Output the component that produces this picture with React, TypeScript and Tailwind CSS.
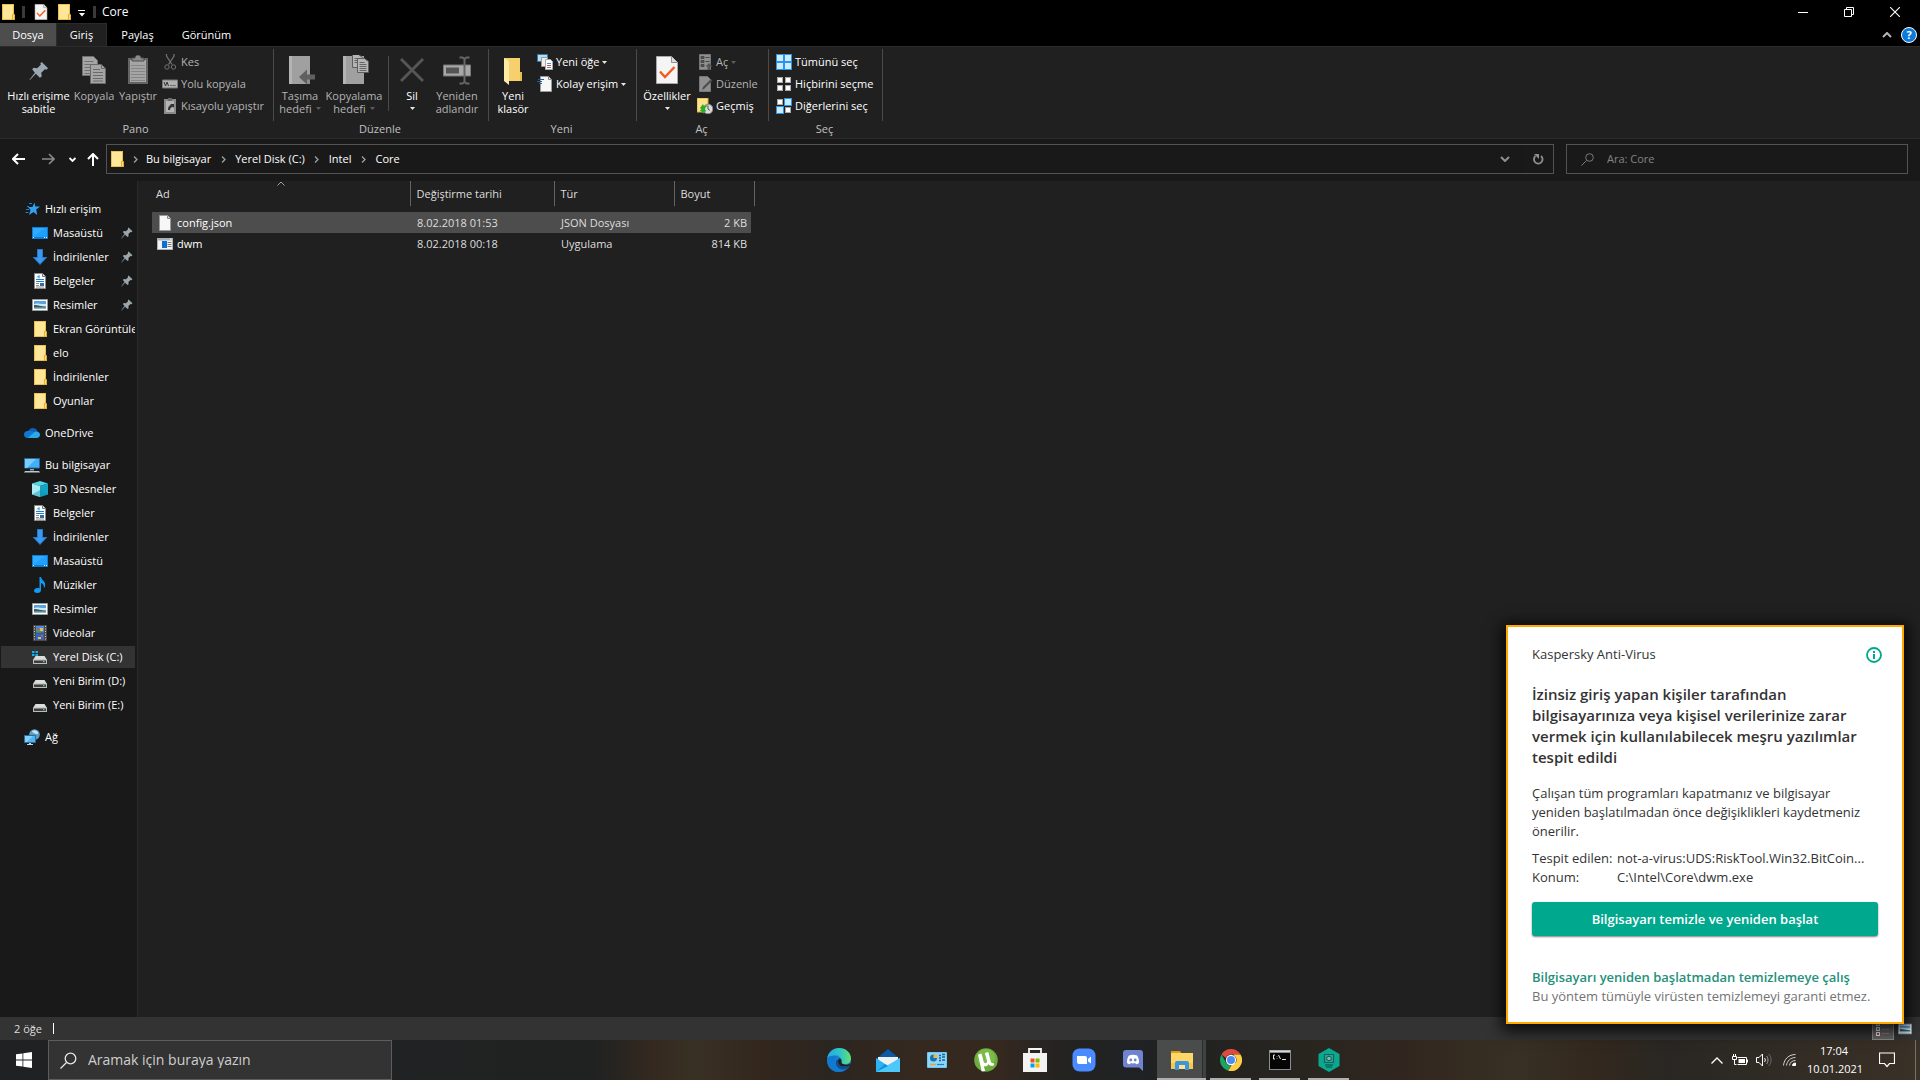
import type { ReactNode } from "react";
import { clsx } from "clsx";

/* ---------- small shared icons ---------- */

const FolderIcon = ({ className = "w-4 h-4" }: { className?: string }) => (
  <svg viewBox="0 0 16 16" className={className}>
    <path d="M2 0h12v11h1v5H2z" fill="#edc04a" />
    <path d="M3 1h10v14H3z" fill="#ffe699" />
    <path d="M12.500 10.500h2v5h-2z" fill="#ffdf7a" stroke="#e0ae35" />
  </svg>
);

const CheckPageIcon = ({ className = "w-4 h-4" }: { className?: string }) => (
  <svg viewBox="0 0 22 28" className={className}>
    <path d="M.5.5h15l6 6v21H.5z" fill="#f5f5f5" stroke="#a8a8a8" />
    <path d="M15.500.5v6h6" fill="#ddd" stroke="#909090" />
    <path d="M4 15.500l5 5.500L18.500 11" fill="none" stroke="#f25c1a" strokeWidth="2.400" />
  </svg>
);

const PageIcon = () => (
  <svg viewBox="0 0 16 16" className="w-4 h-4">
    <path d="M2.500.5h8l3 3v12h-11z" fill="#f7f7f7" stroke="#9a9a9a" />
    <path d="M10.500.5v3h3" fill="#ddd" stroke="#8a8a8a" />
  </svg>
);

const AppIcon = () => (
  <svg viewBox="0 0 16 16" className="w-4 h-4">
    <path d="M0 2h16v12H0z" fill="#a9b0b6" />
    <path d="M1 4.500h14V13H1z" fill="#f4f4f4" />
    <path d="M5 5h5v7H5z" fill="#0b6fd8" />
    <path d="M10.500 6.500h4M10.500 8.500h4M10.500 10.500h4" stroke="#777" />
    <path d="M13 3h1.500" stroke="#fff" />
  </svg>
);

const PinIcon = ({ className = "w-3 h-3", color = "#9aa5ad" }: { className?: string; color?: string }) => (
  <svg viewBox="0 0 22 22" className={className}>
    <path d="M14 1l7 7-2 1.500-1.500-.5-4 4 .5 4-2 1.500-4.500-4.500L1 21l-.5-.5 6-7.500L3.500 9 5 7.500l4 .5 4-4-.5-1.500z" fill={color} />
  </svg>
);

const Caret = ({ dim }: { dim?: boolean }) => (
  <svg viewBox="0 0 5 3" className="w-[5px] h-[3px] shrink-0">
    <path d="M0 0h5L2.500 3z" fill={dim ? "#5c5c5c" : "#e8e8e8"} />
  </svg>
);

/* ---------- sidebar icons ---------- */

const StarIcon = () => (
  <svg viewBox="0 0 16 16" className="w-4 h-4">
    <path d="M10.500 1.500l.8 4H16l-3.800 3 1 5.500-3.700-3L5 14l1.500-5-2.500-3h4.500z" fill="#2ea3f2" />
    <path d="M5 2.500h3M3 5.500h2M2 8.500h3M1.500 11.500h3" stroke="#1c7fd0" />
  </svg>
);

const DesktopIcon = () => (
  <svg viewBox="0 0 16 16" className="w-4 h-4">
    <path d="M0 2h16v12H0z" fill="#0f7bd4" />
    <path d="M1 3h14v9H1z" fill="#1ea0ff" />
    <path d="M1 12L13 3H1z" fill="#2fabff" />
    <path d="M1 12.500h1M12 12.500h1M14 12.500h1" stroke="#fff" />
  </svg>
);

const DownIcon = () => (
  <svg viewBox="0 0 16 16" className="w-4 h-4">
    <path d="M5 0h6v8h4.500L8 16 .5 8H5z" fill="#2878c8" />
    <path d="M6 1h4v8h3.200L8 14.700 2.800 9H6z" fill="#3a9af0" />
  </svg>
);

const DocIcon = () => (
  <svg viewBox="0 0 16 16" className="w-4 h-4">
    <path d="M2.500.5h8l3 3v12h-11z" fill="#fff" stroke="#8b8b8b" />
    <path d="M10.500.5v3h3" fill="#ddd" stroke="#777" />
    <path d="M5 4.500l2-2v3M4 6.500h8M4 8.500h8" stroke="#1d82d2" fill="none" />
    <path d="M4 10.500h3M4 12.500h3M4 14h8" stroke="#8d8d8d" />
    <path d="M8 10h4v3H8z" fill="#2c6ea5" />
  </svg>
);

const PicIcon = () => (
  <svg viewBox="0 0 16 16" className="w-4 h-4">
    <path d="M.5 2.500h15v11H.5z" fill="#fff" stroke="#9a9a9a" />
    <path d="M2 4h12v4H2z" fill="#5aa3e0" />
    <path d="M2 7c3-1.500 6 .5 12 0v3H2z" fill="#d3e8f5" />
    <path d="M2 8c3-.5 6 1 12 1.500V11H2z" fill="#2f5f6f" />
    <path d="M2 10.500h12V12H2z" fill="#8fbcc0" />
  </svg>
);

const CloudIcon = () => (
  <svg viewBox="0 0 16 16" className="w-4 h-4">
    <path d="M4 8c0-3 2.500-5 5-5 2.200 0 4 1.500 4.500 3.500L8 9z" fill="#0f5fb8" />
    <path d="M3.500 6C1.500 6 0 7.500 0 9.500S1.500 13 3.500 13l8-5C9 6 6 5.500 3.500 6z" fill="#0f78d4" />
    <path d="M12.500 6.500c2 0 3.500 1.400 3.500 3.300S14.500 13 12.800 13H3.500L9.500 8c.8-1 1.800-1.500 3-1.500z" fill="#29a8ea" />
  </svg>
);

const PcIcon = () => (
  <svg viewBox="0 0 16 16" className="w-4 h-4">
    <path d="M.5 1.500h15v9.500H.5z" fill="#3fb0fa" stroke="#2a6c97" />
    <path d="M1 2h11L3 11H1z" fill="#7accff" />
    <path d="M6 12h4v1.500H6z" fill="#8fa3b0" />
    <path d="M1 14h14l1 1.500H0z" fill="#b8c8d2" />
  </svg>
);

const CubeIcon = () => (
  <svg viewBox="0 0 16 16" className="w-4 h-4">
    <path d="M8 0l8 2.500L8 5 0 2.500z" fill="#52d5e2" />
    <path d="M0 2.500L8 5v11l-8-2.500z" fill="#a9ecf2" />
    <path d="M16 2.500L8 5v11l8-2.500z" fill="#14a4c4" />
    <path d="M8 9l8 4.500L8 16 0 13.500z" fill="#0d8fb4" opacity=".45" />
  </svg>
);

const MusicIcon = () => (
  <svg viewBox="0 0 16 16" className="w-4 h-4">
    <path d="M7.500 0H9c.3 3 4.500 4 4.200 8-.1 1.500-.7 2.500-1.400 3 .5-3-1-4.500-2.800-5v7c0 1.800-1.500 3-3.500 3S2 15 2 13.700 3.500 11 5.500 11c.8 0 1.500.1 2 .4z" fill="#109cf5" />
  </svg>
);

const VideoIcon = () => (
  <svg viewBox="0 0 16 16" className="w-4 h-4">
    <path d="M1 0h14v16H1z" fill="#4a4a4a" />
    <path d="M4 1h8v6.500H4z" fill="#4a8ae0" />
    <path d="M4 8.500h8V15H4z" fill="#2f66c8" />
    <path d="M5 3h2v2H5zM9 10h2v2H9z" fill="#e04c3a" />
    <path d="M8 3h3v3H8zM6 12h3v2H6z" fill="#f0c030" />
    <path d="M4 6h5v1.500H4z" fill="#3aa04a" />
    <path d="M2.500 1v14M13.500 1v14" stroke="#c9c9c9" strokeDasharray="1 1.500" />
  </svg>
);

const DriveIcon = ({ system }: { system?: boolean }) => (
  <svg viewBox="0 0 16 16" className="w-4 h-4">
    <path d="M3.500 7h9l2.500 4H1z" fill="#dcdcdc" />
    <path d="M1 10.500h14V15H1z" fill="#bcbcbc" />
    <path d="M2 11.500h12V14H2z" fill="#3e3e3e" />
    <path d="M11 12h1.500v1.200H11z" fill="#49e049" />
    {system && <path d="M0 2h2.500v2H0zM3.500 2H6v2H3.500zM0 5h2.500v2H0zM3.500 5H6v2H3.500z" fill="#0fb2f2" />}
  </svg>
);

const NetIcon = () => (
  <svg viewBox="0 0 16 16" className="w-4 h-4">
    <circle cx="10.500" cy="5.500" r="5.300" fill="#5c9cc4" />
    <path d="M8 2c2-1.500 5-1 6 1.500S12 5 11 4.500 8.500 4 8 2z" fill="#c6e5f5" />
    <path d="M.5 6.500h11v7H.5z" fill="#4cb4fb" stroke="#2b6e9a" />
    <path d="M1 7h8l-6 6H1z" fill="#85d0ff" />
    <path d="M5 14h2v1H5zM3 15h6v1H3z" fill="#c4d4de" />
  </svg>
);

/* ---------- ribbon icons ---------- */

const CopyIcon = () => (
  <svg viewBox="0 0 26 30" className="w-[26px] h-[30px]">
    <path d="M1.500 1.500h11l4 4v15h-15z" fill="#a5a5a5" stroke="#707070" />
    <path d="M3.500 6.500h9M3.500 9.500h10M3.500 12.500h10M3.500 15.500h10M3.500 18.500h10" stroke="#707070" />
    <path d="M9.500 9.500h11l4 4v15h-15z" fill="#a5a5a5" stroke="#6a6a6a" />
    <path d="M20.500 9.500v4h4" fill="none" stroke="#6a6a6a" />
    <path d="M12 14.500h7M12 17.500h10M12 20.500h10M12 23.500h10M12 26h10" stroke="#6a6a6a" />
  </svg>
);

const PasteIcon = () => (
  <svg viewBox="0 0 22 30" className="w-[22px] h-[30px]">
    <path d="M1 3h20v26H1z" fill="#646464" />
    <path d="M3 5h16v22H3z" fill="#a5a5a5" />
    <path d="M5 3h3c0-2 1.500-3 3-3s3 1 3 3h3v3H5z" fill="#8a8a8a" stroke="#4c4c4c" />
    <path d="M4 10.500h14M4 13.500h14M4 16.500h14M4 19.500h14M4 22.500h14M4 25.500h14" stroke="#858585" />
  </svg>
);

const CutIcon = () => (
  <svg viewBox="0 0 16 16" className="w-4 h-4" fill="none" stroke="#707070">
    <path d="M4.500 0v2l5.500 8.500M12 0v2L6.500 10.500" strokeWidth="1.300" />
    <circle cx="5" cy="13" r="2.200" />
    <circle cx="11.500" cy="13" r="2.200" />
  </svg>
);

const PathIcon = () => (
  <svg viewBox="0 0 16 16" className="w-4 h-4">
    <path d="M.5 4h15v8H.5z" fill="#b0b0b0" stroke="#777" />
    <path d="M2 6l1.500 4L5 6l1.500 4M8.500 9.500h1M10.500 9.500h1M12.500 9.500h1" stroke="#333" fill="none" />
  </svg>
);

const ShortcutIcon = () => (
  <svg viewBox="0 0 16 16" className="w-4 h-4">
    <path d="M2 1h12v15H2z" fill="#8a8a8a" />
    <path d="M4 3h8v11H4z" fill="#b5b5b5" />
    <path d="M6 0h4v3H6z" fill="#6a6a6a" />
    <path d="M6 12c0-3 1-4.500 3-5L8 6h4v4l-1-1.200c-2 .5-3 1.500-3 3.200z" fill="#333" />
  </svg>
);

const MoveToIcon = () => (
  <svg viewBox="-4 0 32 30" className="w-8 h-[30px]">
    <path d="M1 1h21v28H1z" fill="#a0a0a0" />
    <path d="M1 1h3v28H1z" fill="#b4b4b4" />
    <path d="M19 21h3v8h-3z" fill="#8c8c8c" />
    <path d="M11 22l8-7.500v5h8v5h-8v5z" fill="#606060" />
  </svg>
);

const CopyToIcon = () => (
  <svg viewBox="-4 0 32 30" className="w-8 h-[30px]">
    <path d="M1 1h21v28H1z" fill="#a0a0a0" />
    <path d="M1 1h3v28H1z" fill="#b4b4b4" />
    <path d="M10.500-.5h6l4 3v10h-10z" fill="#b5b5b5" stroke="#5d5d5d" />
    <path d="M12.500 3.500h5M12.500 5.500h6M12.500 7.500h3" stroke="#666" />
    <path d="M15.500 3.500h7l4 3v11h-11z" fill="#b5b5b5" stroke="#5d5d5d" />
    <path d="M17.500 7.500h5M17.500 9.500h7M17.500 11.500h7M17.500 13.500h7M17.500 15.500h7" stroke="#666" />
  </svg>
);

const DeleteIcon = () => (
  <svg viewBox="0 0 24 30" className="w-6 h-[30px]">
    <path d="M1 4l22 22M23 4L1 26" stroke="#565656" strokeWidth="3" />
  </svg>
);

const RenameIcon = () => (
  <svg viewBox="0 0 30 30" className="w-[30px] h-[30px]">
    <path d="M1.500 10h27v11h-27z" fill="#a8a8a8" stroke="#777" />
    <path d="M4 12.500h13v6H4z" fill="#555" />
    <path d="M22.500 3v25M17.500 2.500h3l2 1.500 2-1.500h3M17.500 28.500h3l2-1.500 2 1.500h3" stroke="#666" fill="none" strokeWidth="2" />
  </svg>
);

const NewFolderIcon = () => (
  <svg viewBox="0 0 20 30" className="w-5 h-[30px]">
    <path d="M1 3h16v14h2v9H6z" fill="#f5d06c" />
    <path d="M1 3l5 3v24l-5-4z" fill="#ffe9a6" />
    <path d="M17 17h2v9h-2z" fill="#e8bd50" />
  </svg>
);

const NewItemIcon = () => (
  <svg viewBox="0 0 16 16" className="w-4 h-4">
    <path d="M.5.5h10v7H.5z" fill="#b9dcf0" stroke="#2a7fae" />
    <path d="M4.500 3.500h6v9h-6z" fill="#eee" stroke="#999" />
    <path d="M8.500 5.500h5l2 2v8h-7z" fill="#fff" stroke="#aaa" />
    <path d="M10 9.500h4M10 13.500h4" stroke="#4a90d0" />
    <path d="M10 11.500h4" stroke="#d04a4a" />
  </svg>
);

const EasyIcon = () => (
  <svg viewBox="0 0 16 16" className="w-4 h-4">
    <path d="M3.500.5h8l3 3v12h-11z" fill="#f7f7f7" stroke="#9a9a9a" />
    <path d="M11.500.5v3h3" fill="none" stroke="#888" />
    <path d="M1 3.500h6M0 5.500h5M2 7.500h3" stroke="#1a5f9f" />
  </svg>
);

const OpenIcon = () => (
  <svg viewBox="0 0 16 16" className="w-4 h-4">
    <path d="M2.500.5h11v15h-11z" fill="#8f8f8f" stroke="#777" />
    <path d="M4 2.500h3v2H4zM4 6.500h3v2H4zM4 10.500h3v2H4zM8.500 3.500h4M8.500 7.500h4" fill="#555" stroke="#484848" />
    <path d="M12 9l3.500 3.500H13V16h-2.500v-3.500H8.500z" fill="#555" />
  </svg>
);

const EditIcon = () => (
  <svg viewBox="0 0 16 16" className="w-4 h-4">
    <path d="M2.500.5h8l3 3v12h-11z" fill="#8f8f8f" stroke="#777" />
    <path d="M5 14l1-3 8-8 1.500 1.500-8 8z" fill="#4c4c4c" />
  </svg>
);

const HistoryIcon = () => (
  <svg viewBox="0 0 16 16" className="w-4 h-4">
    <path d="M0 0h11v14H0z" fill="#ffe38c" stroke="#d9ab35" />
    <circle cx="11" cy="11" r="4.800" fill="#dcdcdc" stroke="#8a8a8a" />
    <path d="M11 8v3l2 1.500" fill="none" stroke="#555" />
    <path d="M3 10l3-4 1 2c2-1 4-1 5 0-3 0-4 1.500-4 4l1.500.5-3 3-4-3.500h2z" fill="#2cae2c" />
  </svg>
);

const SelectIcon = ({ on }: { on: number[] }) => (
  <svg viewBox="0 0 16 16" className="w-4 h-4">
    {on.length === 4 && <path d="M0 0h16v16H0z" fill="#1e88e5" />}
    {[0, 1, 2, 3].map((i) => {
      const active = on.includes(i);
      const x = (i % 2) * 8 + (active ? 0.5 : 1.5);
      const y = Math.floor(i / 2) * 8 + (active ? 0.5 : 1.5);
      const size = active ? 7 : 5;
      return (
        <rect key={i} x={x} y={y} width={size} height={size} fill={active ? "#cfeaff" : "#fff"} stroke={active ? "#2a93ea" : "#a9a9a9"} />
      );
    })}
  </svg>
);

/* ---------- ribbon ---------- */

type BigButtonProps = {
  icon: ReactNode;
  lines: string[];
  width: string;
  dim?: boolean;
  caret?: boolean;
};

const BigButton = ({ icon, lines, width, dim, caret }: BigButtonProps) => (
  <button className={clsx("flex flex-col items-center shrink-0 pt-[6px] leading-[13px] whitespace-nowrap", width, dim ? "text-[#b4b4b4]" : "text-white")}>
    <span className="h-[34px] flex items-start justify-center">{icon}</span>
    {lines.map((line, i) => (
      <span key={line} className="flex items-center gap-1">
        {line}
        {caret && i === 1 && <Caret dim={dim} />}
      </span>
    ))}
    {caret && lines.length === 1 && (
      <span className="h-[13px] flex items-center">
        <Caret dim={dim} />
      </span>
    )}
  </button>
);

type SmallButtonProps = { icon: ReactNode; label: string; dim?: boolean; caret?: boolean };

const SmallButton = ({ icon, label, dim, caret }: SmallButtonProps) => (
  <button className={clsx("h-[22px] flex items-center gap-[3px] whitespace-nowrap", dim ? "text-[#b4b4b4]" : "text-white")}>
    {icon}
    <span>{label}</span>
    {caret && <Caret dim={dim} />}
  </button>
);

const Group = ({ title, width, children }: { title: string; width: string; children: ReactNode }) => (
  <section className={clsx("flex flex-col shrink-0 pt-[2px]", width)}>
    <div className="flex h-[72px] border-r border-[#4a4a4a]">{children}</div>
    <h2 className="pr-[3px] text-center leading-4 text-[#c0c0c0]">{title}</h2>
  </section>
);

const Ribbon = () => (
  <div className="flex h-[93px] bg-[#202020] border-y border-[#2b2b2b] overflow-hidden">
    <Group title="Pano" width="w-[274px]">
      <div className="w-1.5" />
      <BigButton icon={<span className="pt-1.5"><PinIcon className="w-5 h-5" color="#9aa8b4" /></span>} lines={["Hızlı erişime", "sabitle"]} width="w-[65px]" />
      <BigButton icon={<CopyIcon />} lines={["Kopyala"]} width="w-[46px]" dim />
      <BigButton icon={<PasteIcon />} lines={["Yapıştır"]} width="w-[42px]" dim />
      <div className="flex flex-col pl-[3px] pt-[2px]">
        <SmallButton icon={<CutIcon />} label="Kes" dim />
        <SmallButton icon={<PathIcon />} label="Yolu kopyala" dim />
        <SmallButton icon={<ShortcutIcon />} label="Kısayolu yapıştır" dim />
      </div>
    </Group>
    <Group title="Düzenle" width="w-[215px]">
      <div className="w-1" />
      <BigButton icon={<MoveToIcon />} lines={["Taşıma", "hedefi"]} width="w-[44px]" dim caret />
      <BigButton icon={<CopyToIcon />} lines={["Kopyalama", "hedefi"]} width="w-[64px]" dim caret />
      <div className="w-px h-[55px] mt-[7px] mx-0.5 bg-[#4a4a4a]" />
      <BigButton icon={<DeleteIcon />} lines={["Sil"]} width="w-[42px]" caret />
      <BigButton icon={<RenameIcon />} lines={["Yeniden", "adlandır"]} width="w-[48px]" dim />
    </Group>
    <Group title="Yeni" width="w-[148px]">
      <div className="w-1" />
      <BigButton icon={<NewFolderIcon />} lines={["Yeni", "klasör"]} width="w-[40px]" />
      <div className="flex flex-col pl-1 pt-[2px]">
        <SmallButton icon={<NewItemIcon />} label="Yeni öğe" caret />
        <SmallButton icon={<EasyIcon />} label="Kolay erişim" caret />
      </div>
    </Group>
    <Group title="Aç" width="w-[132px]">
      <div className="w-1" />
      <BigButton icon={<CheckPageIcon className="w-[22px] h-[30px]" />} lines={["Özellikler"]} width="w-[52px]" caret />
      <div className="flex flex-col pl-1 pt-[2px]">
        <SmallButton icon={<OpenIcon />} label="Aç" dim caret />
        <SmallButton icon={<EditIcon />} label="Düzenle" dim />
        <SmallButton icon={<HistoryIcon />} label="Geçmiş" />
      </div>
    </Group>
    <Group title="Seç" width="w-[114px]">
      <div className="flex flex-col pl-[7px] pt-[2px]">
        <SmallButton icon={<SelectIcon on={[0, 1, 2, 3]} />} label="Tümünü seç" />
        <SmallButton icon={<SelectIcon on={[]} />} label="Hiçbirini seçme" />
        <SmallButton icon={<SelectIcon on={[1, 2]} />} label="Diğerlerini seç" />
      </div>
    </Group>
  </div>
);

/* ---------- title bar and tabs ---------- */

const TitleBar = () => (
  <header className="flex items-center h-[23px] bg-black">
    <FolderIcon />
    <span className="w-[3px] h-3 ml-[6px] bg-[#3a3a3a]" />
    <span className="ml-[9px]"><CheckPageIcon className="w-[14px] h-4" /></span>
    <span className="ml-2"><FolderIcon /></span>
    <svg viewBox="0 0 8 8" className="w-2 h-2 ml-[6px] mt-1">
      <path d="M0 .5h7" stroke="#fff" />
      <path d="M1 3h6L4 6.500z" fill="#fff" />
    </svg>
    <span className="w-[3px] h-3 ml-[7px] bg-[#3a3a3a]" />
    <h1 className="ml-[6px] text-[12px] text-white">Core</h1>
    <div className="ml-auto flex">
      <button aria-label="Simge durumuna küçült" className="w-[46px] h-5 flex items-center justify-center">
        <svg viewBox="0 0 10 10" className="w-[10px] h-[10px]"><path d="M0 5.500h10" stroke="#fff" /></svg>
      </button>
      <button aria-label="Önceki boyut" className="w-[46px] h-5 flex items-center justify-center">
        <svg viewBox="0 0 10 10" className="w-[10px] h-[10px]" fill="none" stroke="#fff">
          <path d="M.5 2.500h7v7h-7zM2.500 2.500v-2h7v7h-2" />
        </svg>
      </button>
      <button aria-label="Kapat" className="w-[46px] h-5 flex items-center justify-center">
        <svg viewBox="0 0 10 10" className="w-[10px] h-[10px]"><path d="M0 0l10 10M10 0L0 10" stroke="#fff" strokeWidth="1.100" /></svg>
      </button>
      <span className="w-0.5" />
    </div>
  </header>
);

const Tabs = () => (
  <nav className="flex h-[23px] bg-black text-white">
    <button className="w-14 bg-[#4d4d4d]">Dosya</button>
    <button className="w-[51px] bg-[#202020] border-t border-x border-[#2b2b2b]">Giriş</button>
    <button className="w-[61px]">Paylaş</button>
    <button className="w-[77px]">Görünüm</button>
    <div className="ml-auto flex items-center gap-[9px] pr-[3px]">
      <button aria-label="Şeridi küçült">
        <svg viewBox="0 0 10 6" className="w-[10px] h-[6px]"><path d="M1 5l4-4 4 4" fill="none" stroke="#b5b5b5" strokeWidth="2" /></svg>
      </button>
      <button className="w-4 h-4 rounded-full border border-white bg-[#0b7ad8] text-[11px] leading-[14px] font-bold">?</button>
    </div>
  </nav>
);

/* ---------- address bar ---------- */

const Chevron = () => (
  <svg viewBox="0 0 5 7" className="w-[5px] h-[7px] shrink-0"><path d="M1 .5l3 3-3 3" fill="none" stroke="#a0a0a0" strokeWidth="1.300" /></svg>
);

const crumbs = ["Bu bilgisayar", "Yerel Disk (C:)", "Intel", "Core"];

const AddressBar = () => (
  <div className="flex items-center h-[42px] bg-[#191919] pr-3 pb-0.5">
    <div className="w-[106px] shrink-0 flex items-center pl-3">
      <button aria-label="Geri"><svg viewBox="0 0 13 12" className="w-[13px] h-3"><path d="M6 1L1 6l5 5M1 6h12" fill="none" stroke="#fff" strokeWidth="2" /></svg></button>
      <button aria-label="İleri" className="ml-[17px]"><svg viewBox="0 0 13 12" className="w-[13px] h-3"><path d="M7 1l5 5-5 5M12 6H0" fill="none" stroke="#8a8a8a" strokeWidth="1.600" /></svg></button>
      <button aria-label="Son konumlar" className="ml-[14px]"><svg viewBox="0 0 7 5" className="w-[7px] h-[5px]"><path d="M.5 1l3 3 3-3" fill="none" stroke="#fff" strokeWidth="1.800" /></svg></button>
      <button aria-label="Yukarı" className="ml-[11px]"><svg viewBox="0 0 12 13" className="w-3 h-[13px]"><path d="M1 6l5-5 5 5M6 1v12" fill="none" stroke="#fff" strokeWidth="2" /></svg></button>
    </div>
    <div className="flex-1 h-[30px] flex items-center border border-[#535353] pl-0.5 text-white">
      <FolderIcon />
      {crumbs.map((name, i) => (
        <span key={name} className="flex items-center">
          <span className={clsx("flex justify-center", i === 0 ? "w-[21px]" : "w-6")}><Chevron /></span>
          <a href="#">{name}</a>
        </span>
      ))}
      <button aria-label="Önceki konumlar" className="ml-auto w-8 flex justify-center">
        <svg viewBox="0 0 10 6" className="w-[10px] h-[6px]"><path d="M1 1l4 4 4-4" fill="none" stroke="#909090" strokeWidth="2" /></svg>
      </button>
      <button aria-label="Yenile" className="w-8 h-full flex items-center justify-center border-l border-[#161616]">
        <svg viewBox="0 0 12 12" className="w-3 h-3">
          <path d="M9 3a4.300 4.300 0 1 1-5.500 0" fill="none" stroke="#909090" strokeWidth="1.800" />
          <path d="M2 1h5v5L5.500 4.500z" fill="#909090" />
        </svg>
      </button>
    </div>
    <label className="ml-3 w-[342px] h-[30px] flex items-center border border-[#535353]">
      <svg viewBox="0 0 13 13" className="w-[13px] h-[13px] ml-[14px]" fill="none" stroke="#7a7a7a">
        <circle cx="8.500" cy="4.500" r="3.800" />
        <path d="M5.500 7.500L.5 12.500" />
      </svg>
      <input aria-label="Ara: Core" placeholder="Ara: Core" className="ml-[13px] flex-1 min-w-0 bg-transparent outline-none placeholder:text-[#838383]" />
    </label>
  </div>
);

/* ---------- sidebar ---------- */

type NavItem = { label: string; icon: ReactNode; pinned?: boolean; active?: boolean };

const sections: { root: NavItem; items: NavItem[] }[] = [
  {
    root: { label: "Hızlı erişim", icon: <StarIcon /> },
    items: [
      { label: "Masaüstü", icon: <DesktopIcon />, pinned: true },
      { label: "İndirilenler", icon: <DownIcon />, pinned: true },
      { label: "Belgeler", icon: <DocIcon />, pinned: true },
      { label: "Resimler", icon: <PicIcon />, pinned: true },
      { label: "Ekran Görüntüleri", icon: <FolderIcon /> },
      { label: "elo", icon: <FolderIcon /> },
      { label: "İndirilenler", icon: <FolderIcon /> },
      { label: "Oyunlar", icon: <FolderIcon /> },
    ],
  },
  { root: { label: "OneDrive", icon: <CloudIcon /> }, items: [] },
  {
    root: { label: "Bu bilgisayar", icon: <PcIcon /> },
    items: [
      { label: "3D Nesneler", icon: <CubeIcon /> },
      { label: "Belgeler", icon: <DocIcon /> },
      { label: "İndirilenler", icon: <DownIcon /> },
      { label: "Masaüstü", icon: <DesktopIcon /> },
      { label: "Müzikler", icon: <MusicIcon /> },
      { label: "Resimler", icon: <PicIcon /> },
      { label: "Videolar", icon: <VideoIcon /> },
      { label: "Yerel Disk (C:)", icon: <DriveIcon system />, active: true },
      { label: "Yeni Birim (D:)", icon: <DriveIcon /> },
      { label: "Yeni Birim (E:)", icon: <DriveIcon /> },
    ],
  },
  { root: { label: "Ağ", icon: <NetIcon /> }, items: [] },
];

const NavRow = ({ item, nested }: { item: NavItem; nested?: boolean }) => (
  <li className="h-6 py-px pl-px">
    <a
      href="#"
      className={clsx("h-[22px] flex items-center whitespace-nowrap overflow-hidden", nested ? "pl-[31px]" : "pl-[23px]", item.active && "bg-[#333333]")}
    >
      <span className="shrink-0">{item.icon}</span>
      <span className="ml-[5px]">{item.label}</span>
      {item.pinned && <span className="ml-auto mr-[2px]"><PinIcon /></span>}
    </a>
  </li>
);

const Sidebar = () => (
  <aside className="w-[138px] shrink-0 bg-[#191919] border-r border-[#2b2b2b] pt-4 pr-0.5 text-white">
    <ul className="flex flex-col gap-2">
      {sections.map(({ root, items }) => (
        <li key={root.label}>
          <ul>
            <NavRow item={root} />
            {items.map((item) => (
              <NavRow key={item.label} item={item} nested />
            ))}
          </ul>
        </li>
      ))}
    </ul>
  </aside>
);

/* ---------- file list ---------- */

const files = [
  { name: "config.json", date: "8.02.2018 01:53", type: "JSON Dosyası", size: "2 KB", icon: <PageIcon />, selected: true },
  { name: "dwm", date: "8.02.2018 00:18", type: "Uygulama", size: "814 KB", icon: <AppIcon />, selected: false },
];

const FileList = () => (
  <main className="flex-1 bg-[#202020] pl-[14px]">
    <table className="table-fixed w-[602px] border-collapse text-left">
      <colgroup>
        <col className="w-[258px]" />
        <col className="w-[144px]" />
        <col className="w-[120px]" />
        <col className="w-[77px]" />
        <col className="w-[3px]" />
      </colgroup>
      <thead>
        <tr className="h-[25px] text-[#dedede]">
          <th className="relative font-normal p-0 pl-1 border-r border-[#636363]">
            Ad
            <svg viewBox="0 0 8 5" className="absolute left-1/2 -translate-x-1/2 top-0 w-2 h-[5px]"><path d="M.5 4.500L4 1l3.500 3.500" fill="none" stroke="#a0a0a0" /></svg>
          </th>
          <th className="font-normal p-0 pl-[6px] border-r border-[#636363]">Değiştirme tarihi</th>
          <th className="font-normal p-0 pl-[6px] border-r border-[#636363]">Tür</th>
          <th colSpan={2} className="font-normal p-0 pl-[6px] border-r border-[#636363]">Boyut</th>
        </tr>
      </thead>
      <tbody>
        <tr className="h-[6px]"><td colSpan={5} className="p-0" /></tr>
        {files.map((f) => {
          const cell = clsx("p-0", f.selected && "bg-[#4d4d4d]");
          return (
            <tr key={f.name} className="h-[21px] text-[#dedede]">
              <td className={cell}>
                <span className="flex items-center gap-1 pl-[5px] text-white">{f.icon}{f.name}</span>
              </td>
              <td className={clsx(cell, "pl-[7px]")}>{f.date}</td>
              <td className={clsx(cell, "pl-[7px]")}>{f.type}</td>
              <td className={clsx(cell, "pr-1 text-right")}>{f.size}</td>
              <td className="p-0" />
            </tr>
          );
        })}
      </tbody>
    </table>
  </main>
);

const StatusBar = () => (
  <footer className="flex items-center h-[23px] bg-[#333333] pl-[14px] text-[#dedede]">
    <span>2 öğe</span>
    <span className="ml-[11px] w-px h-[11px] bg-white" />
    <div className="ml-auto flex items-center pr-2">
      <button aria-label="Ayrıntılar" className="w-[22px] h-[23px] border border-[#8a8a8a] bg-[#626262] flex items-center pl-[3px]">
        <svg viewBox="0 0 14 14" className="w-[14px] h-[14px]">
          <path d="M0 0h4v4H0zM0 5h4v4H0zM0 10h4v4H0z" fill="#e8e8e8" />
          <path d="M1 1h2v2H1z" fill="#8a8a8a" />
          <path d="M1 6h2v2H1z" fill="#3a86c8" />
          <path d="M1 11h2v2H1z" fill="#d03a3a" />
          <path d="M6 2.500h3M10 2.500h3M6 7.500h3M10 7.500h3M6 11.500h3M10 11.500h3" stroke="#858585" />
        </svg>
      </button>
      <button aria-label="Büyük simgeler" className="ml-1"><span className="block w-[14px] [&>svg]:w-[14px] [&>svg]:h-[14px]"><PicIcon /></span></button>
    </div>
  </footer>
);

/* ---------- antivirus alert ---------- */

const Alert = () => (
  <div role="alertdialog" aria-label="Kaspersky Anti-Virus" className="absolute right-4 bottom-14 w-[398px] border-2 border-[#ffa800] bg-white px-6 pt-[18px] pb-4 text-[#333333] text-[13px] leading-[19px] shadow-[0_3px_14px_4px_rgba(0,0,0,0.8)]">
    <div className="flex items-center justify-between">
      <p>Kaspersky Anti-Virus</p>
      <button aria-label="Bilgi" className="-mr-1">
        <svg viewBox="0 0 16 16" className="w-4 h-4">
          <circle cx="8" cy="8" r="7" fill="none" stroke="#00a88e" strokeWidth="1.800" />
          <path d="M7 4h2v2H7zM7 7h2v5H7z" fill="#00a88e" />
        </svg>
      </button>
    </div>
    <h2 className="mt-5 text-[15px] leading-[21px] font-semibold">
      İzinsiz giriş yapan kişiler tarafından<br />
      bilgisayarınıza veya kişisel verilerinize zarar<br />
      vermek için kullanılabilecek meşru yazılımlar<br />
      tespit edildi
    </h2>
    <p className="mt-4">
      Çalışan tüm programları kapatmanız ve bilgisayar<br />
      yeniden başlatılmadan önce değişiklikleri kaydetmeniz<br />
      önerilir.
    </p>
    <dl className="mt-2 grid grid-cols-[85px_1fr] whitespace-nowrap">
      <dt>Tespit edilen:</dt>
      <dd>not-a-virus:UDS:RiskTool.Win32.BitCoin...</dd>
      <dt>Konum:</dt>
      <dd>C:\Intel\Core\dwm.exe</dd>
    </dl>
    <button className="mt-[15px] block w-full h-[34px] rounded-[3px] bg-[#00a88e] text-white font-semibold shadow-[0_1px_2px_rgba(0,0,0,0.5)]">
      Bilgisayarı temizle ve yeniden başlat
    </button>
    <a href="#" className="mt-8 block font-semibold text-[#24907a] whitespace-nowrap">Bilgisayarı yeniden başlatmadan temizlemeye çalış</a>
    <p className="text-[#737373] whitespace-nowrap">Bu yöntem tümüyle virüsten temizlemeyi garanti etmez.</p>
  </div>
);

/* ---------- taskbar ---------- */

const EdgeLogo = () => (
  <svg viewBox="0 0 24 24" className="w-6 h-6">
    <defs>
      <linearGradient id="edgeTop" x1="0" x2="1"><stop offset="0" stopColor="#25a9e8" /><stop offset=".6" stopColor="#33c7c0" /><stop offset="1" stopColor="#66e06a" /></linearGradient>
    </defs>
    <circle cx="12" cy="12" r="12" fill="#1380d0" />
    <path d="M24 11v5l-1.500 1.500L24 20z" fill="#2b241f" />
    <path d="M.3 10C1.500 4 6.500 0 12 0c7 0 12 5 12 10.500 0 3.500-2.500 5.700-5.800 5.700-2.500 0-4.200-1-3.700-2.200C15.500 11 13 8 9 8 5 7.500 1.500 8.500.3 10z" fill="url(#edgeTop)" />
    <path d="M.2 10.500C2 7 9.500 7 12 8c-3.500.5-5 3.500-4.300 6.500C8.500 19 12.500 22 17 22c-6 4-15 1-16.500-6.500C0 13.500 0 12 .2 10.500z" fill="#1279cf" />
    <path d="M9.500 12c-2 3.500.5 9 6 9.500 3 .3 5.500-1 7-3.500-3 1.300-8 1-10-1-1.500-1.500-1.500-3.500-.5-5z" fill="#114d96" />
    <path d="M12 10.500c1.500 0 2.800 1.300 2.500 3-.2 1 0 2.300 1.500 2.600 2 1 5 .8 7-.6l-.5 2.200c-3 1.300-8 1.300-10-.7-1.500-1.500-2-5-.5-6.500z" fill="#241c18" />
  </svg>
);

const MailLogo = () => (
  <svg viewBox="0 0 24 24" className="w-6 h-6">
    <path d="M0 11L12 1l12 10z" fill="#0c59a4" />
    <path d="M2 9h20v9H2z" fill="#f2f2f2" />
    <path d="M0 10l12 8L24 10v14H0z" fill="#2bb3f3" />
    <path d="M24 10L0 24h24z" fill="#4cc8fa" />
    <path d="M0 24l9-8 3 2z" fill="#1590dc" />
  </svg>
);

const ControlPanelLogo = () => (
  <svg viewBox="0 0 24 24" className="w-6 h-6">
    <rect x="2" y="4" width="20" height="16" rx="1" fill="#6cc8f5" />
    <path d="M3 5h18v14H3z" fill="#8ad7fb" />
    <circle cx="8.500" cy="10" r="3.500" fill="#1d6fb8" />
    <path d="M8.500 10V6a4 4 0 0 1 4 4z" fill="#f5b82e" />
    <path d="M14 7.500h2M14 10h2M14 12.500h2M17 6.500h3M17 9h3M17 12h3" stroke="#1c5f9c" strokeWidth="1.300" />
    <path d="M5 16.500h6" stroke="#f0a030" strokeWidth="1.500" />
    <path d="M12 16.500h7" stroke="#2a7cc0" strokeWidth="1.200" />
  </svg>
);

const TorrentLogo = () => (
  <svg viewBox="0 0 24 24" className="w-6 h-6">
    <circle cx="12" cy="12" r="11.800" fill="#6cab3c" />
    <circle cx="12" cy="10" r="9" fill="#7bbc48" />
    <path d="M4 6.500l3.500-1 2.200 8.300c.7 2.200 4 1.600 3.300-1L10.800 5l3.500-1 2.500 9.500c.4 1.500 1.500 2 3 1.500l.4 2.200c-2.300 1.200-4.700.5-5.700-1.200-1 1.900-3 2.600-4.700 2.200l1.400 4.800-3.500.5z" fill="#fff" />
  </svg>
);

const StoreLogo = () => (
  <svg viewBox="0 0 24 24" className="w-6 h-6">
    <path d="M6 7V1h12v6" fill="none" stroke="#f5f5f5" strokeWidth="1.800" />
    <path d="M0 5h24v19H0z" fill="#f3f3f3" />
    <path d="M7.500 10.500h4v4h-4z" fill="#f25022" />
    <path d="M12.500 10.500h4v4h-4z" fill="#7fba00" />
    <path d="M7.500 15.500h4v4h-4z" fill="#00a4ef" />
    <path d="M12.500 15.500h4v4h-4z" fill="#ffb900" />
  </svg>
);

const ZoomLogo = () => (
  <svg viewBox="0 0 24 24" className="w-6 h-6">
    <rect x=".5" y=".5" width="23" height="23" rx="7" fill="#4a8cff" />
    <path d="M5 8h8a2 2 0 0 1 2 2v6H7a2 2 0 0 1-2-2zM16 11l3-2.500v7L16 13.500z" fill="#fff" />
  </svg>
);

const DiscordLogo = () => (
  <svg viewBox="0 0 24 24" className="w-6 h-6">
    <path d="M5 2h14a3 3 0 0 1 3 3v18l-4-3.500H5a3 3 0 0 1-3-3V5a3 3 0 0 1 3-3z" fill="#6f83cf" />
    <path d="M8 7.500c2.500-1 5.500-1 8 0 1.500 2 2.200 4.500 2 7.500-1 .9-2 1.300-3 1.300l-.8-1.200c-1.500.4-3 .4-4.400 0L9 16.300c-1 0-2-.4-3-1.300-.2-3 .5-5.500 2-7.500z" fill="#fff" />
    <circle cx="9.800" cy="12" r="1.400" fill="#6f83cf" />
    <circle cx="14.200" cy="12" r="1.400" fill="#6f83cf" />
  </svg>
);

const ExplorerLogo = () => (
  <svg viewBox="0 0 24 24" className="w-6 h-6">
    <path d="M1 3h9l2 3H1z" fill="#e0a010" />
    <path d="M1 5h22v16H1z" fill="#ffd767" />
    <path d="M1 15h22v6H1z" fill="#f8c84e" />
    <path d="M5 21v-6a2 2 0 0 1 2-2h10a2 2 0 0 1 2 2v7h-4v-5H9v5H5z" fill="#3a97dd" />
    <path d="M9 17h6v4H9z" fill="#ffe28a" />
  </svg>
);

const ChromeLogo = () => (
  <svg viewBox="0 0 24 24" className="w-[22px] h-[22px]">
    <path d="M12 0a12 12 0 0 1 10.400 6H12a6 6 0 0 0-5.600 3.800L1.600 6A12 12 0 0 1 12 0z" fill="#dd4b3e" />
    <path d="M1.600 6l5.200 9A6 6 0 0 0 12 18l-3 5.600A12 12 0 0 1 1.600 6z" fill="#1da362" />
    <path d="M22.400 6A12 12 0 0 1 9 23.600L13 17l4.200-2A6 6 0 0 0 15 6.800V6z" fill="#ffcd46" />
    <circle cx="12" cy="12" r="5.600" fill="#fff" />
    <circle cx="12" cy="12" r="4.400" fill="#4c8bf5" />
  </svg>
);

const CmdLogo = () => (
  <svg viewBox="0 0 24 24" className="w-6 h-6">
    <path d="M1 2h22v20H1z" fill="#8a8d90" />
    <path d="M2 5h20v16H2z" fill="#050505" />
    <path d="M2 2.500h20V4H2z" fill="#d5d8da" />
    <path d="M7 7H5.500v4H7M9 8v.5M9 10v.5M10.500 7l2 4M14 11.500h4" fill="none" stroke="#e8e8e8" />
  </svg>
);

const KasperskyLogo = () => (
  <svg viewBox="0 0 24 24" className="w-6 h-6">
    <path d="M12 0l10.500 6v12L12 24 1.500 18V6z" fill="#0aa98f" />
    <path d="M7.500 6.500h9v8h-9z" fill="#3f9c90" stroke="#08695d" strokeWidth="1.200" />
    <circle cx="12" cy="10.500" r="2.300" fill="#6fc4ba" stroke="#08594f" />
    <path d="M8 17h8M9 19h6" stroke="#08695d" strokeWidth="1.300" />
  </svg>
);

const apps = [
  { name: "Edge", icon: <EdgeLogo /> },
  { name: "Posta", icon: <MailLogo /> },
  { name: "Denetim Masası", icon: <ControlPanelLogo /> },
  { name: "uTorrent", icon: <TorrentLogo /> },
  { name: "Microsoft Store", icon: <StoreLogo /> },
  { name: "Zoom", icon: <ZoomLogo /> },
  { name: "Discord", icon: <DiscordLogo /> },
  { name: "Dosya Gezgini", icon: <ExplorerLogo />, active: true },
  { name: "Chrome", icon: <ChromeLogo />, running: true },
  { name: "Komut İstemi", icon: <CmdLogo />, running: true },
  { name: "Kaspersky", icon: <KasperskyLogo />, running: true },
];

const Taskbar = () => (
  <div className="flex h-10 bg-[linear-gradient(90deg,#1f2123_0%,#202222_31%,#34291f_34%,#393024_36%,#32261d_40%,#2b2520_43%,#35291f_48%,#35281f_52%,#242322_55%,#1f2123_60%,#28251f_68%,#31261f_73%,#383024_79%,#33281e_83%,#292723_87%,#3a3127_100%)]">
    <button aria-label="Başlat" className="w-12 shrink-0 flex items-center justify-center">
      <svg viewBox="0 0 16 16" className="w-4 h-4"><path d="M0 2.300L6.500 1.400v6.200H0zM7.300 1.300L16 0v7.600H7.300zM0 8.400h6.500v6.200L0 13.700zM7.300 8.400H16V16l-8.700-1.300z" fill="#fff" /></svg>
    </button>
    <label className="w-[344px] shrink-0 flex items-center bg-[#333333] border border-[#5d5d5d]">
      <svg viewBox="0 0 17 17" className="w-[17px] h-[17px] ml-[11px]" fill="none" stroke="#e8e8e8" strokeWidth="1.300">
        <circle cx="10.500" cy="6.500" r="5.300" />
        <path d="M6.500 10.500L.5 16.500" />
      </svg>
      <input aria-label="Aramak için buraya yazın" placeholder="Aramak için buraya yazın" className="ml-[11px] flex-1 min-w-0 bg-transparent outline-none text-[14px] placeholder:text-[#cfcfcf]" />
    </label>
    <div className="ml-auto flex">
      {apps.map((app) => (
        <button
          key={app.name}
          aria-label={app.name}
          className={clsx("relative w-[49px] flex items-center justify-center", app.active && "bg-[#4a4b4b]")}
        >
          {app.icon}
          {app.active && <span className="absolute inset-y-0 right-0 w-1 border-l border-[#2c2d2d] bg-[#404141]" />}
          {app.active && <span className="absolute inset-x-0 bottom-0 h-0.5 bg-[#b3aeae]" />}
          {app.running && <span className="absolute inset-x-1 bottom-0 h-0.5 bg-[#b3aeae]" />}
        </button>
      ))}
    </div>
    <div className="ml-[358px] flex items-center text-white">
      <svg viewBox="0 0 12 7" className="w-3 h-[7px]"><path d="M.5 6.500L6 1l5.500 5.500" fill="none" stroke="#fff" strokeWidth="1.300" /></svg>
      <svg viewBox="0 0 16 12" className="w-4 h-3 ml-[9px]" fill="none" stroke="#fff">
        <path d="M5.500 3.500h9v7H5.500M15.500 5.500v3M1.500 0v2.500M3.500 0v2.500M.5 2.500h4v3h-4zM2.500 5.500v5h2" />
        <path d="M6.500 5h6.500v4H6.500z" fill="#fff" stroke="none" />
      </svg>
      <svg viewBox="0 0 17 14" className="w-[17px] h-[14px] ml-2" fill="none" stroke="#fff">
        <path d="M.5 4.500h2.500L6.500 1v12L3 9.500H.5zM8.500 5c1 1 1 3 0 4" />
        <path d="M10.500 3c2 2 2 6 0 8" stroke="#a0a0a0" />
        <path d="M12.500 1c3.500 3 3.500 9 0 12" stroke="#6a6a6a" />
      </svg>
      <svg viewBox="0 0 14 14" className="w-[14px] h-[14px] ml-[10px]" fill="none" stroke="#fff">
        <path d="M.5 12.500C1 6 6 1.500 12.500 1.500M3.500 12.500c.5-4.500 4-8 9-8M6.500 12.500c.3-3 2.500-5 6-5" stroke="#d0d0d0" />
        <path d="M9.500 12.500c0-1.500 1-2.500 3-2.500v2.500z" fill="#fff" />
      </svg>
      <div className="ml-[10px] w-[54px] text-center text-[11px] leading-[18px] whitespace-nowrap">
        <p>17:04</p>
        <p>10.01.2021</p>
      </div>
      <svg viewBox="0 0 16 16" className="w-4 h-4 ml-[18px]"><path d="M.5 1h15v10.500H10.500L8 14.500 5.500 11.500H.5z" fill="none" stroke="#fff" strokeWidth="1.200" /></svg>
      <span className="ml-5 mr-1 w-px h-10 bg-[#77736c]" />
    </div>
  </div>
);

export default function App() {
  return (
    <div className="relative min-h-screen flex flex-col overflow-hidden bg-[#202020] text-[11px] leading-4 font-['Open_Sans','Noto_Sans',sans-serif]">
      <TitleBar />
      <Tabs />
      <Ribbon />
      <AddressBar />
      <div className="flex flex-1">
        <Sidebar />
        <FileList />
      </div>
      <StatusBar />
      <Taskbar />
      <Alert />
    </div>
  );
}
